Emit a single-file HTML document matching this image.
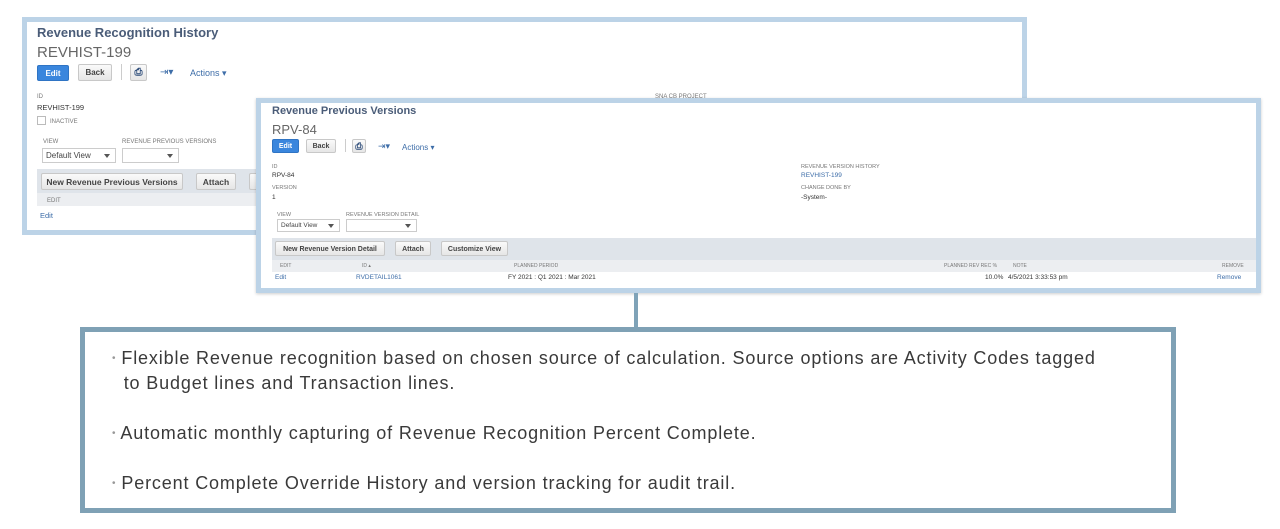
<!DOCTYPE html>
<html><head><meta charset="utf-8"><style>
*{margin:0;padding:0;box-sizing:border-box}
body{width:1280px;height:529px;background:#fff;position:relative;overflow:hidden;font-family:"Liberation Sans",sans-serif;color:#333}
.a{position:absolute;white-space:nowrap}
.box{position:absolute;background:#fff;border:5px solid #bcd3e7}
.t{font-weight:bold;color:#4a5c78}
.id{color:#666}
.btn{position:absolute;border:1px solid #c8c8c8;border-radius:2px;background:linear-gradient(#fafafa,#e6e6e6);color:#444;font-weight:bold;text-align:center}
.ed{background:#3a86dd;border-color:#2f74c4;color:#fff}
.lbl{color:#777;font-size:6px}
.sel{position:absolute;border:1px solid #ccc;background:#fff;font-size:8px;color:#444;padding-left:3px}
.sel:after{content:"";position:absolute;right:5px;top:40%;border:3px solid transparent;border-top:4px solid #555}
.link{color:#3d6da8}
.bar{position:absolute;background:#dfe4ea}
.bl{position:absolute;white-space:nowrap;font-size:18px;letter-spacing:0.85px;color:#3a3a3a;line-height:25px}
.bl span{color:#999;font-size:10px;vertical-align:3px;letter-spacing:0}
</style></head><body>

<!-- box 1 -->
<div class="box" style="left:22px;top:17px;width:1005px;height:218px"></div>
<div class="a t" style="left:37px;top:25px;font-size:13px">Revenue Recognition History</div>
<div class="a id" style="left:37px;top:44px;font-size:15px">REVHIST-199</div>
<div class="btn ed" style="left:37px;top:65px;width:32px;height:16px;font-size:8px;line-height:15px">Edit</div>
<div class="btn" style="left:78px;top:64px;width:34px;height:17px;font-size:8px;line-height:16px">Back</div>
<div class="a" style="left:121px;top:64px;width:1px;height:16px;background:#ccc"></div>
<div class="btn" style="left:130px;top:64px;width:17px;height:17px;font-size:10px;line-height:15px;color:#2b4a78">&#9113;</div>
<div class="a link" style="left:160px;top:67px;font-size:10px">⇥▾</div>
<div class="a link" style="left:190px;top:68px;font-size:9px">Actions ▾</div>
<div class="a lbl" style="left:37px;top:94px">ID</div>
<div class="a" style="left:37px;top:103px;font-size:7.5px">REVHIST-199</div>
<div class="a" style="left:37px;top:116px;width:9px;height:9px;border:1px solid #bbb"></div>
<div class="a lbl" style="left:50px;top:119px">INACTIVE</div>
<div class="a lbl" style="left:43px;top:139px">VIEW</div>
<div class="a lbl" style="left:122px;top:139px">REVENUE PREVIOUS VERSIONS</div>
<div class="sel" style="left:42px;top:148px;width:74px;height:15px;line-height:13px">Default View</div>
<div class="sel" style="left:122px;top:148px;width:57px;height:15px"></div>
<div class="bar" style="left:37px;top:169px;width:985px;height:24px"></div>
<div class="btn" style="left:41px;top:173px;width:142px;height:17px;font-size:8.5px;line-height:16px">New Revenue Previous Versions</div>
<div class="btn" style="left:196px;top:173px;width:40px;height:17px;font-size:8.5px;line-height:16px">Attach</div>
<div class="btn" style="left:249px;top:173px;width:40px;height:17px;font-size:8.5px;line-height:16px">C</div>
<div class="bar" style="left:37px;top:193px;width:985px;height:13px;background:#eceef1"></div>
<div class="a lbl" style="left:47px;top:198px">EDIT</div>
<div class="a link" style="left:40px;top:211px;font-size:7.5px">Edit</div>
<div class="a lbl" style="left:655px;top:94px">SNA CB PROJECT</div>

<!-- box 2 -->
<div class="box" style="left:256px;top:98px;width:1005px;height:195px;box-shadow:0 1px 3px rgba(0,0,0,.2)"></div>
<div class="a t" style="left:272px;top:105px;font-size:11px">Revenue Previous Versions</div>
<div class="a id" style="left:272px;top:122px;font-size:13px">RPV-84</div>
<div class="btn ed" style="left:272px;top:139px;width:27px;height:14px;font-size:7px;line-height:14px">Edit</div>
<div class="btn" style="left:306px;top:139px;width:30px;height:14px;font-size:7px;line-height:14px">Back</div>
<div class="a" style="left:345px;top:139px;width:1px;height:13px;background:#ccc"></div>
<div class="btn" style="left:352px;top:139px;width:14px;height:14px;font-size:9px;line-height:12px;color:#2b4a78">&#9113;</div>
<div class="a link" style="left:378px;top:141px;font-size:9px">⇥▾</div>
<div class="a link" style="left:402px;top:143px;font-size:8px">Actions ▾</div>
<div class="a lbl" style="left:272px;top:164px;font-size:5.5px">ID</div>
<div class="a" style="left:272px;top:172px;font-size:6.5px">RPV-84</div>
<div class="a lbl" style="left:272px;top:185px;font-size:5.5px">VERSION</div>
<div class="a" style="left:272px;top:194px;font-size:6.5px">1</div>
<div class="a lbl" style="left:801px;top:164px;font-size:5.5px">REVENUE VERSION HISTORY</div>
<div class="a link" style="left:801px;top:172px;font-size:6.5px">REVHIST-199</div>
<div class="a lbl" style="left:801px;top:185px;font-size:5.5px">CHANGE DONE BY</div>
<div class="a" style="left:801px;top:194px;font-size:6.5px">-System-</div>
<div class="a lbl" style="left:277px;top:212px;font-size:5.5px">VIEW</div>
<div class="a lbl" style="left:346px;top:212px;font-size:5.5px">REVENUE VERSION DETAIL</div>
<div class="sel" style="left:277px;top:219px;width:63px;height:13px;line-height:11px;font-size:6.5px">Default View</div>
<div class="sel" style="left:346px;top:219px;width:71px;height:13px"></div>
<div class="bar" style="left:272px;top:238px;width:984px;height:22px"></div>
<div class="btn" style="left:275px;top:241px;width:110px;height:15px;font-size:7px;line-height:15px">New Revenue Version Detail</div>
<div class="btn" style="left:395px;top:241px;width:36px;height:15px;font-size:7px;line-height:15px">Attach</div>
<div class="btn" style="left:441px;top:241px;width:67px;height:15px;font-size:7px;line-height:15px">Customize View</div>
<div class="bar" style="left:272px;top:260px;width:984px;height:12px;background:#eceef1"></div>
<div class="a lbl" style="left:280px;top:263px;font-size:5px">EDIT</div>
<div class="a lbl" style="left:362px;top:263px;font-size:5px">ID ▴</div>
<div class="a lbl" style="left:514px;top:263px;font-size:5px">PLANNED PERIOD</div>
<div class="a lbl" style="left:944px;top:263px;font-size:5px">PLANNED REV REC %</div>
<div class="a lbl" style="left:1013px;top:263px;font-size:5px">NOTE</div>
<div class="a lbl" style="left:1222px;top:263px;font-size:5px">REMOVE</div>
<div class="a link" style="left:275px;top:274px;font-size:6.5px">Edit</div>
<div class="a link" style="left:356px;top:274px;font-size:6.5px">RVDETAIL1061</div>
<div class="a" style="left:508px;top:274px;font-size:6.5px">FY 2021 : Q1 2021 : Mar 2021</div>
<div class="a" style="left:985px;top:274px;font-size:6.5px">10.0%</div>
<div class="a" style="left:1008px;top:274px;font-size:6.5px">4/5/2021 3:33:53 pm</div>
<div class="a link" style="left:1217px;top:274px;font-size:6.5px">Remove</div>

<!-- connector -->
<div class="a" style="left:634px;top:293px;width:4px;height:36px;background:#7fa3b8"></div>

<!-- box 3 -->
<div class="box" style="left:80px;top:327px;width:1096px;height:186px;border-color:#7fa1b5"></div>
<div class="bl" style="left:112px;top:346px"><span>•</span> Flexible Revenue recognition based on chosen source of calculation. Source options are Activity Codes tagged<br>&nbsp;&nbsp;to Budget lines and Transaction lines.</div>
<div class="bl" style="left:112px;top:421px"><span>•</span> Automatic monthly capturing of Revenue Recognition Percent Complete.</div>
<div class="bl" style="left:112px;top:471px"><span>•</span> Percent Complete Override History and version tracking for audit trail.</div>
</body></html>
